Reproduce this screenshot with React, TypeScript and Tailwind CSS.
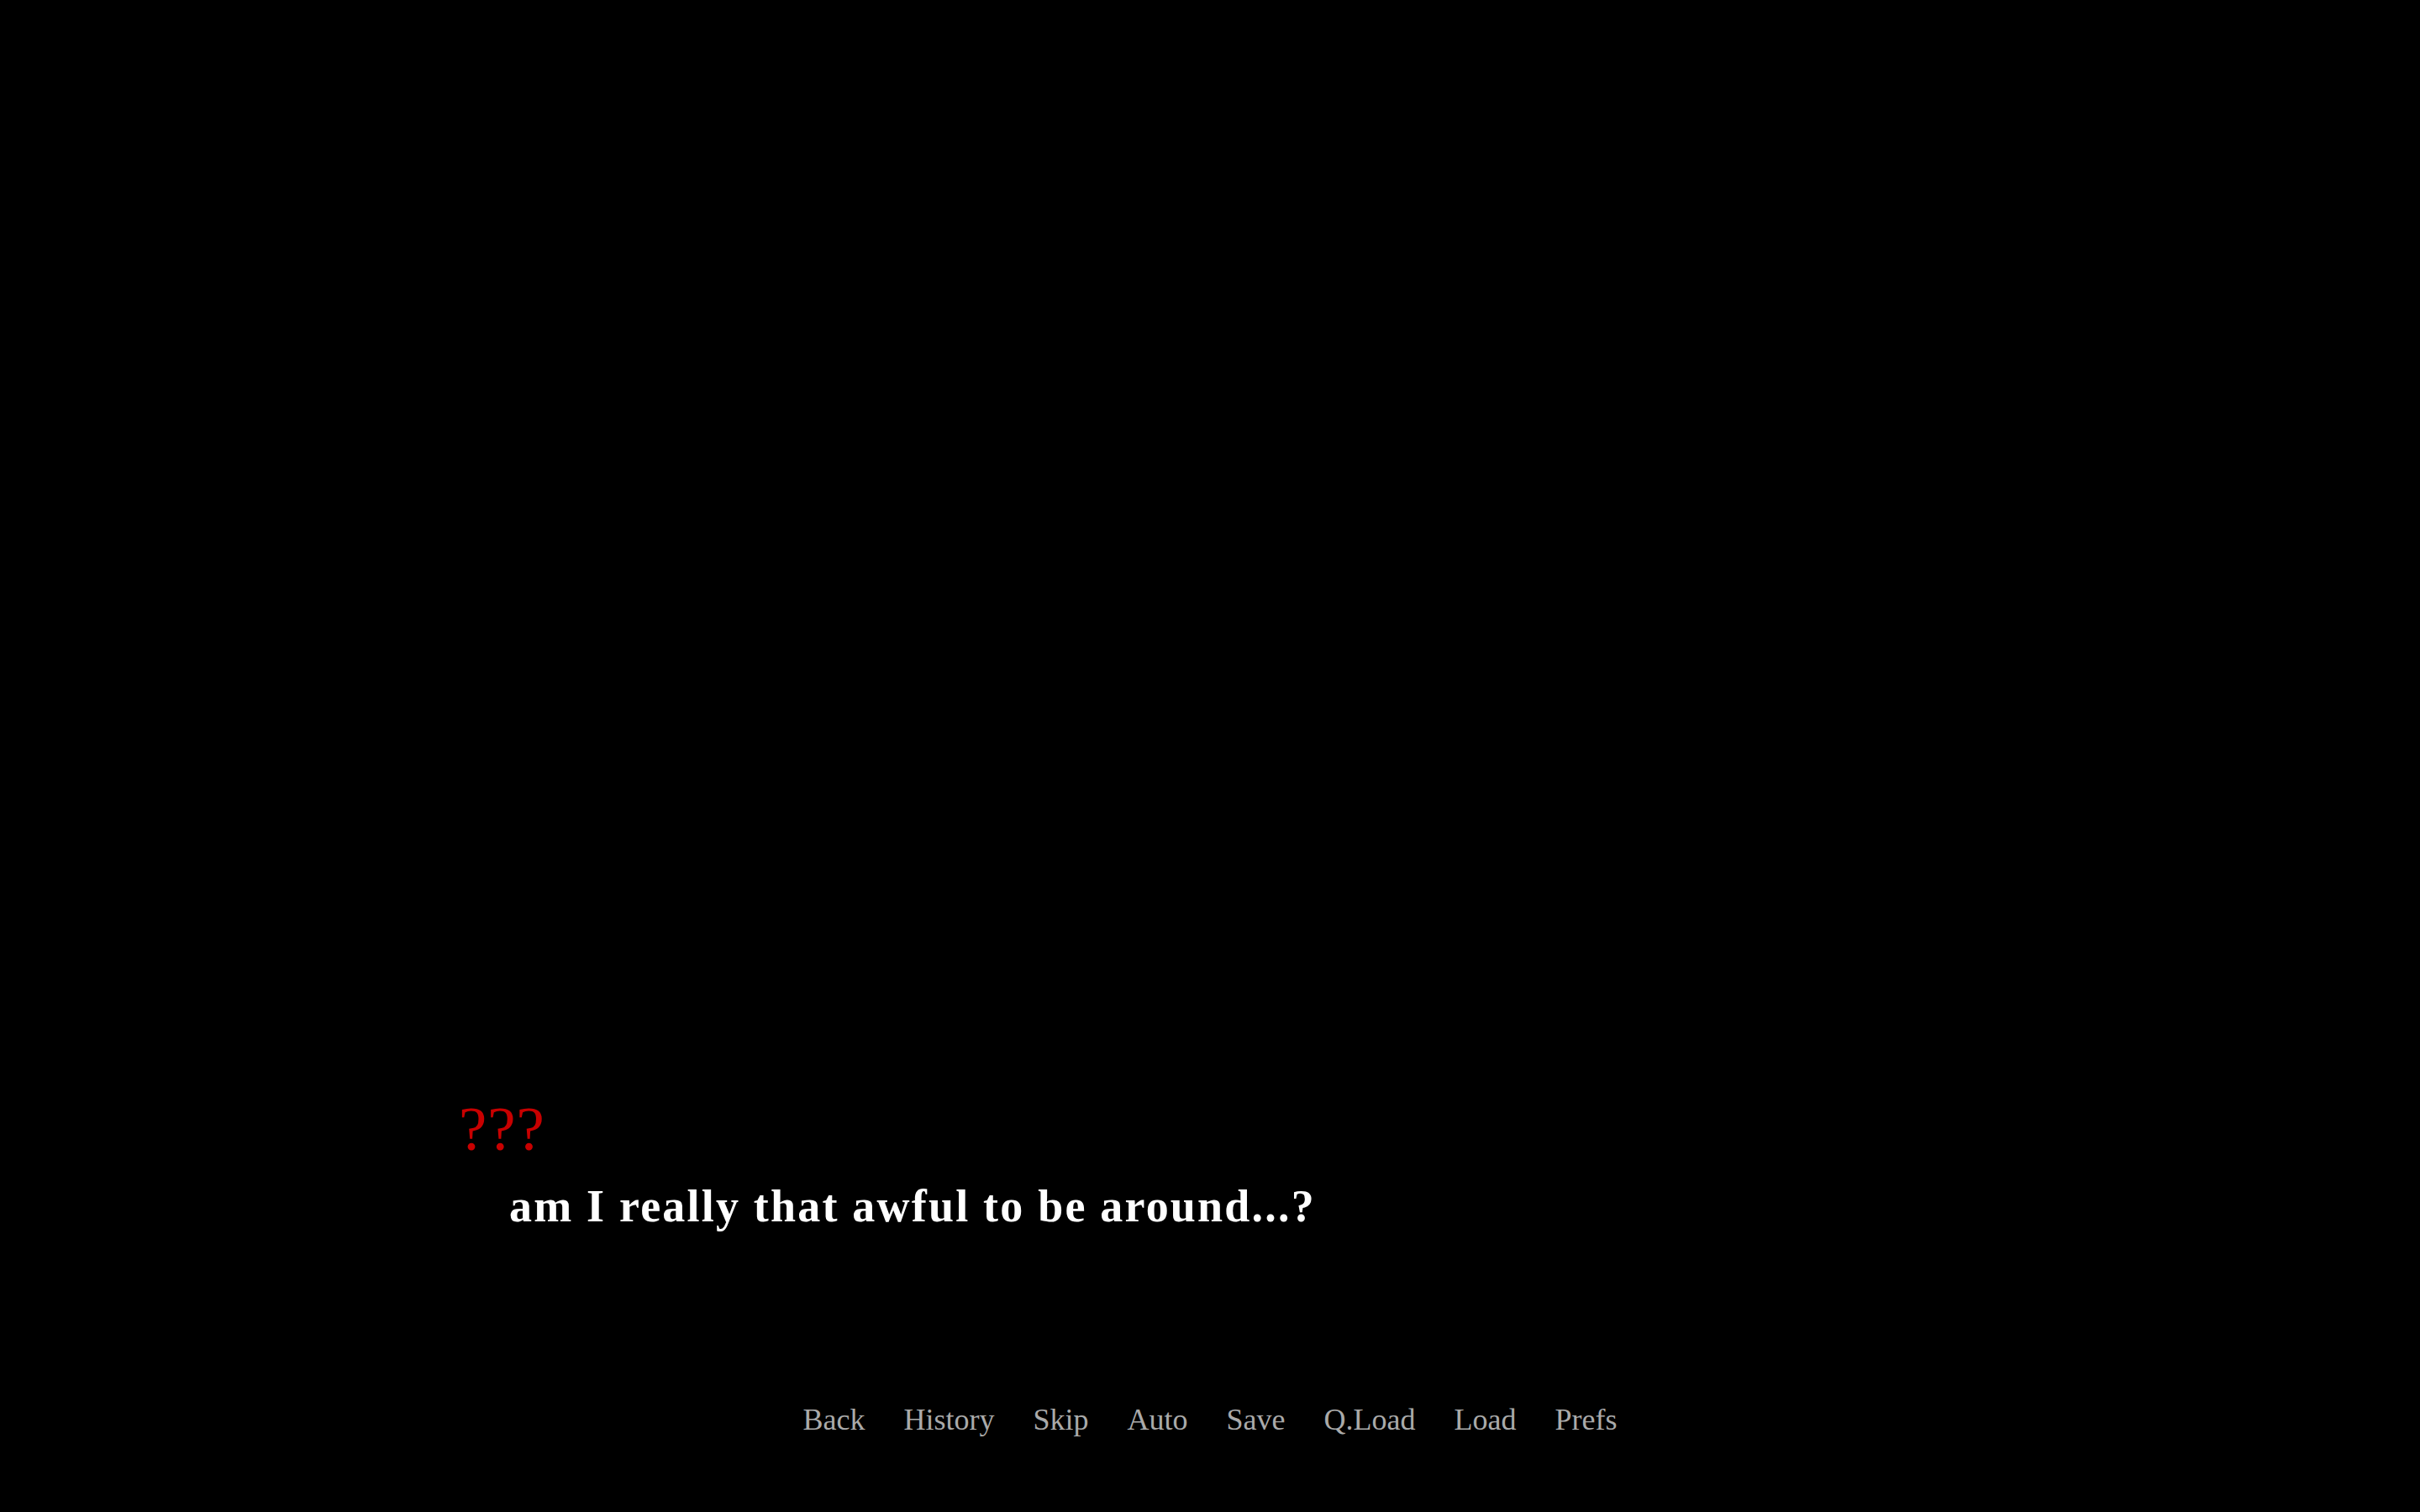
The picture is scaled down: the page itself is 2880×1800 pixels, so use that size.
export default function App() {
  const menu = ["Back", "History", "Skip", "Auto", "Save", "Q.Load", "Load", "Prefs"];

  return (
    <div
      className="flex h-screen w-full flex-col justify-end bg-black pb-[92px]"
      style={{ fontFamily: '"Liberation Serif", "DejaVu Serif", serif' }}
    >
      {/* say window */}
      <div className="flex flex-col">
        <div className="pl-[546px] text-[75px] leading-none tracking-[1px] text-[#c80000]">???</div>
        <div className="mt-[28px] pl-[606px] text-[54px] font-bold leading-none tracking-[2.2px] text-white">
          am I really that awful to be around...?
        </div>
      </div>

      {/* quick menu */}
      <nav className="mt-[209px] flex items-center justify-center gap-[46px]">
        {menu.map((item) => (
          <button
            key={item}
            className="cursor-pointer text-[36px] leading-none text-[#aaaaaa] hover:text-white"
          >
            {item}
          </button>
        ))}
      </nav>
    </div>
  );
}
